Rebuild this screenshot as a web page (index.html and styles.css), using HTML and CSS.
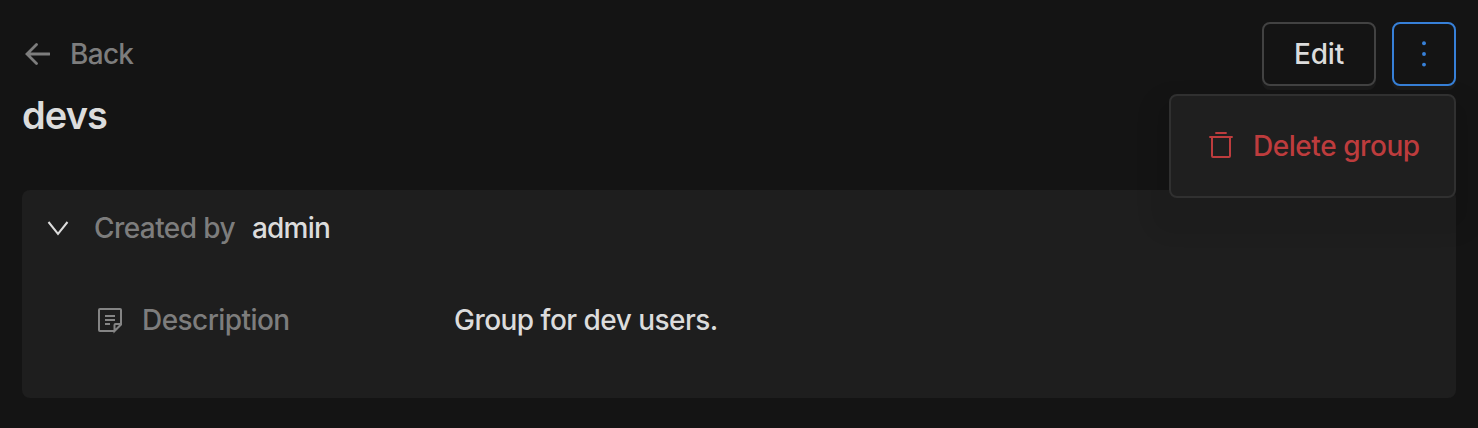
FILE: index.html
```html
<!DOCTYPE html>
<html lang="en">
<head>
<meta charset="utf-8">
<title>devs</title>
<link rel="stylesheet" href="styles.css">
</head>
<body>
<main class="page">
  <header class="header">
    <div class="heading">
      <a class="back">
        <svg class="back-icon" width="28" height="28" viewBox="0 0 28 28"><path d="M14.500 4.500 5 14l9.500 9.500M5.500 14H27.500"/></svg>
        <span class="back-label">Back</span>
      </a>
      <h1 class="title">devs</h1>
    </div>
    <div class="actions">
      <button class="button edit">Edit</button>
      <div class="more">
        <button class="button more-button" aria-label="More">
          <svg width="28" height="28" viewBox="0 0 28 28"><circle cx="14" cy="3.300" r="1.950"/><circle cx="14" cy="14" r="1.950"/><circle cx="14" cy="24.600" r="1.950"/></svg>
        </button>
        <div class="menu">
          <svg class="trash" width="28" height="28" viewBox="0 0 28 28"><path d="M8.300 1H19.700M2.300 5H25.700M5 5V24Q5 25 6 25H22Q23 25 23 24V5"/></svg>
          <span class="menu-label">Delete group</span>
        </div>
      </div>
    </div>
  </header>
  <section class="card">
    <div class="card-head">
      <svg class="chevron" width="24" height="24" viewBox="0 0 24 24"><path d="M2.500 6 12 17.800 21.500 6"/></svg>
      <span class="created">Created by</span>
      <span class="author">admin</span>
    </div>
    <div class="field">
      <svg class="note" width="28" height="28" viewBox="0 0 28 28"><path d="M18.500 25H4Q3 25 3 24V4Q3 3 4 3H24Q25 3 25 4V18.500L18.500 25V19Q18.500 18 19.500 18H25M9 10H19M9 14H19M9 18H14"/></svg>
      <span class="field-label">Description</span>
      <span class="field-value">Group for dev users.</span>
    </div>
  </section>
</main>
</body>
</html>
```
FILE: styles.css
```css
* { box-sizing: border-box; }

body {
  margin: 0;
  background: #141414;
  color: #dcdcdc;
  font: 450 28px/44px Inter, "Liberation Sans", sans-serif;
}

svg {
  display: block;
  flex: none;
  fill: none;
  stroke: currentColor;
  stroke-width: 2;
}

span { white-space: nowrap; }

.page {
  height: 428px;
  padding: 22px 22px 30px;
  overflow: hidden;
}

.header {
  display: flex;
  justify-content: space-between;
  height: 168px;
}

.back {
  display: flex;
  align-items: center;
  gap: 20px;
  height: 64px;
  color: #7d7d7d;
}

.back-icon { stroke-width: 2.8; stroke-linecap: round; }
.back-label { letter-spacing: -0.7px; }

.title {
  margin: 3px 0 0;
  font-size: 38px;
  font-weight: 600;
  line-height: 52px;
  letter-spacing: -0.9px;
}

.actions {
  display: flex;
  align-items: flex-start;
  gap: 16px;
}

.button {
  display: flex;
  align-items: center;
  justify-content: center;
  width: 114px;
  height: 64px;
  padding: 0;
  border: 2px solid #424242;
  border-radius: 8px;
  background: #141414;
  box-shadow: 0 4px 0 #1b1b1b;
  color: #dcdcdc;
  font: inherit;
}

.edit { letter-spacing: -0.2px; }

.more { position: relative; }

.more-button {
  width: 64px;
  border-color: #3780d8;
  color: #3780d8;
}

.more-button svg { fill: currentColor; stroke: none; }

.menu {
  position: absolute;
  top: 72px;
  right: 0;
  display: flex;
  align-items: center;
  gap: 18px;
  width: 287px;
  height: 104px;
  padding-left: 36px;
  border: 2px solid #303030;
  border-radius: 8px;
  background: #1f1f1f;
  box-shadow: 0 18px 16px 20px rgba(0, 0, 0, 0.06);
  color: #bd3c3d;
}

.menu-label { letter-spacing: -0.45px; }

.card {
  height: 208px;
  border-radius: 8px;
  background: #1e1e1e;
}

.card-head {
  display: flex;
  align-items: center;
  height: 76px;
  padding-left: 24px;
}

.created {
  margin-left: 24px;
  color: #7d7d7d;
  letter-spacing: -0.58px;
}

.author {
  margin-left: 17px;
  letter-spacing: -0.8px;
}

.field {
  display: flex;
  align-items: center;
  height: 44px;
  margin-top: 32px;
  padding-left: 74px;
}

.note { color: #858585; }

.field-label {
  width: 312px;
  margin-left: 18px;
  color: #7d7d7d;
  letter-spacing: -0.56px;
}

.field-value { letter-spacing: -0.53px; }
```
